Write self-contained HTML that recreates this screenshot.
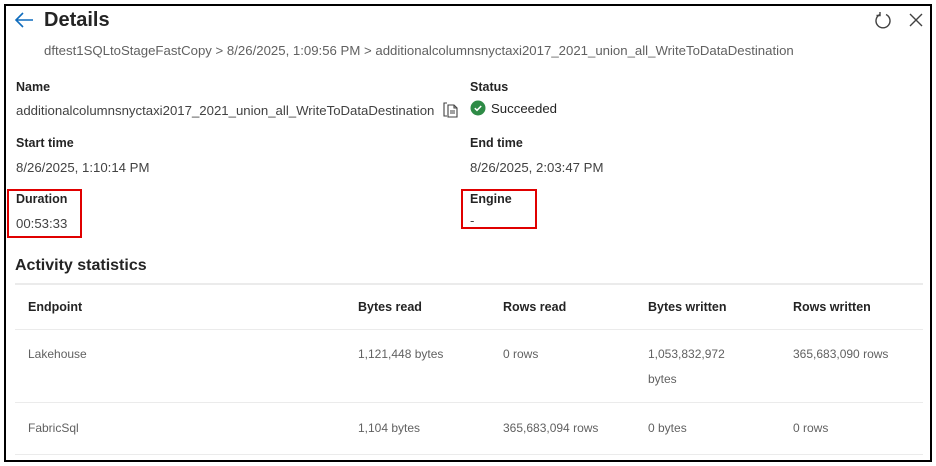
<!DOCTYPE html>
<html><head><meta charset="utf-8"><style>
*{margin:0;padding:0;box-sizing:border-box}
body{width:936px;height:466px;background:#fff;font-family:"Liberation Sans",sans-serif;color:#242424;position:relative;overflow:hidden}
.a{position:absolute;white-space:nowrap}
.frame{position:absolute;left:4px;top:4px;width:928px;height:458px;border:2px solid #000}
.lbl{font-size:12.5px;font-weight:bold;color:#242424}
.val{font-size:13.2px;color:#424242}
.red{position:absolute;border:2px solid #e00000}
.th{font-size:12.5px;font-weight:bold;color:#242424}
.td{font-size:12px;color:#616161}
.hr{position:absolute;left:15px;width:908px;height:1px;background:#ebebeb}
</style></head><body>
<div class="frame"></div>
<svg class="a" style="left:14px;top:11px" width="20" height="18" viewBox="0 0 20 18"><path d="M9 2 L2 9 L9 16 M2 9 H19" fill="none" stroke="#0f6cbd" stroke-width="1.6"/></svg>
<div class="a" style="left:44px;top:9px;font-size:20px;font-weight:bold;color:#242424">Details</div>
<svg class="a" style="left:873px;top:11px" width="20" height="20" viewBox="0 0 20 20"><path d="M7 3.5 A7 7 0 1 0 13 3.5" fill="none" stroke="#424242" stroke-width="1.4"/><path d="M7 1 V4.5 H3.5" fill="none" stroke="#424242" stroke-width="1.4"/></svg>
<svg class="a" style="left:909px;top:13px" width="14" height="14" viewBox="0 0 14 14"><path d="M1 1 L13 13 M13 1 L1 13" stroke="#424242" stroke-width="1.4"/></svg>
<div class="a val" style="left:44px;top:43px;color:#616161">dftest1SQLtoStageFastCopy &gt; 8/26/2025, 1:09:56 PM &gt; additionalcolumnsnyctaxi2017_2021_union_all_WriteToDataDestination</div>

<div class="a lbl" style="left:16px;top:80px">Name</div>
<div class="a val" style="left:16px;top:103px">additionalcolumnsnyctaxi2017_2021_union_all_WriteToDataDestination</div>
<svg class="a" style="left:442px;top:101px" width="18" height="18" viewBox="0 0 18 18"><path d="M5 2 H2 V15 H5 M6 4 H12 L15 7 V16 H6 Z M12 4 V7 H15 M8 10 H13 M8 12 H13" fill="none" stroke="#424242" stroke-width="1.1"/></svg>
<div class="a lbl" style="left:470px;top:80px">Status</div>
<svg class="a" style="left:470px;top:100px" width="16" height="16" viewBox="0 0 16 16"><circle cx="8" cy="8" r="7.5" fill="#2e8b46"/><path d="M4.8 8.2 L7 10.3 L11.2 6" fill="none" stroke="#fff" stroke-width="1.5"/></svg>
<div class="a val" style="left:491px;top:101px;color:#242424">Succeeded</div>

<div class="a lbl" style="left:16px;top:136px">Start time</div>
<div class="a val" style="left:16px;top:160px">8/26/2025, 1:10:14 PM</div>
<div class="a lbl" style="left:470px;top:136px">End time</div>
<div class="a val" style="left:470px;top:160px">8/26/2025, 2:03:47 PM</div>

<div class="a lbl" style="left:16px;top:192px">Duration</div>
<div class="a val" style="left:16px;top:216px">00:53:33</div>
<div class="a lbl" style="left:470px;top:192px">Engine</div>
<div class="a val" style="left:470px;top:213px">-</div>
<div class="red" style="left:7px;top:189px;width:75px;height:49px"></div>
<div class="red" style="left:461px;top:189px;width:76px;height:40px"></div>

<div class="a" style="left:15px;top:257px;font-size:16px;font-weight:bold;color:#242424">Activity statistics</div>
<div class="hr" style="top:283px;height:2px"></div>
<div class="a th" style="left:28px;top:300px">Endpoint</div>
<div class="a th" style="left:358px;top:300px">Bytes read</div>
<div class="a th" style="left:503px;top:300px">Rows read</div>
<div class="a th" style="left:648px;top:300px">Bytes written</div>
<div class="a th" style="left:793px;top:300px">Rows written</div>
<div class="hr" style="top:329px"></div>
<div class="a td" style="left:28px;top:347px">Lakehouse</div>
<div class="a td" style="left:358px;top:347px">1,121,448 bytes</div>
<div class="a td" style="left:503px;top:347px">0 rows</div>
<div class="a td" style="left:648px;top:347px">1,053,832,972</div>
<div class="a td" style="left:648px;top:372px">bytes</div>
<div class="a td" style="left:793px;top:347px">365,683,090 rows</div>
<div class="hr" style="top:402px"></div>
<div class="a td" style="left:28px;top:421px">FabricSql</div>
<div class="a td" style="left:358px;top:421px">1,104 bytes</div>
<div class="a td" style="left:503px;top:421px">365,683,094 rows</div>
<div class="a td" style="left:648px;top:421px">0 bytes</div>
<div class="a td" style="left:793px;top:421px">0 rows</div>
<div class="hr" style="top:454px"></div>
</body></html>
